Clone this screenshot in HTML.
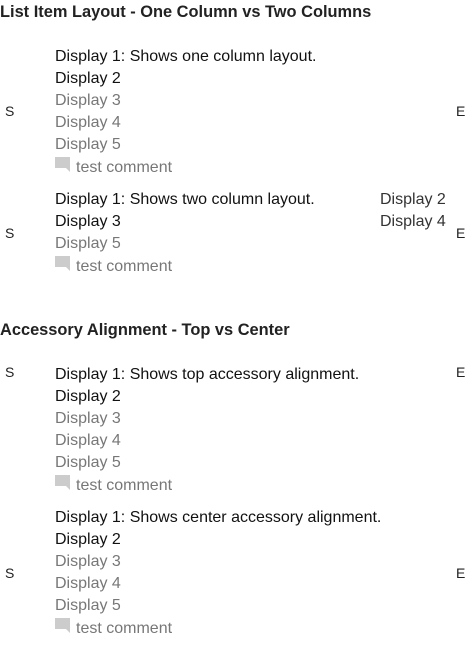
<!DOCTYPE html>
<html><head><meta charset="utf-8"><style>
body{margin:0;width:470px;height:664px;background:#fff;position:relative;overflow:hidden;font-family:"Liberation Sans",sans-serif}
.t{position:absolute;left:0;font-weight:bold;font-size:16.4px;color:#222;line-height:22px;white-space:nowrap}
.l{position:absolute;font-size:16px;line-height:22px;white-space:nowrap;color:#111;margin-top:1px}
.g{color:#777}
.a{position:absolute;font-size:14px;line-height:16px;color:#222}
.c{position:absolute;left:55px;width:15px;height:11px;background:#ccc}
.c:after{content:"";position:absolute;right:0;bottom:-4px;border-top:4px solid #ccc;border-left:4px solid transparent}
</style></head><body>
<div class="t" style="top:1px">List Item Layout - One Column vs Two Columns</div>

<div class="a" style="left:5px;top:103px">S</div><div class="a" style="left:456px;top:103px">E</div>
<div class="l" style="left:55px;top:45px">Display 1: Shows one column layout.</div>
<div class="l" style="left:55px;top:67px">Display 2</div>
<div class="l g" style="left:55px;top:89px">Display 3</div>
<div class="l g" style="left:55px;top:111px">Display 4</div>
<div class="l g" style="left:55px;top:133px">Display 5</div>
<div class="c" style="top:157px"></div><div class="l g" style="left:76px;top:156px">test comment</div>

<div class="a" style="left:5px;top:225px">S</div><div class="a" style="left:456px;top:225px">E</div>
<div class="l" style="left:55px;top:188px">Display 1: Shows two column layout.</div>
<div class="l" style="left:55px;top:210px">Display 3</div>
<div class="l g" style="left:55px;top:232px">Display 5</div>
<div class="c" style="top:256px"></div><div class="l g" style="left:76px;top:255px">test comment</div>
<div class="l" style="left:380px;top:188px;color:#333">Display 2</div>
<div class="l" style="left:380px;top:210px;color:#333">Display 4</div>

<div class="t" style="top:319px">Accessory Alignment - Top vs Center</div>

<div class="a" style="left:5px;top:364px">S</div><div class="a" style="left:456px;top:364px">E</div>
<div class="l" style="left:55px;top:363px">Display 1: Shows top accessory alignment.</div>
<div class="l" style="left:55px;top:385px">Display 2</div>
<div class="l g" style="left:55px;top:407px">Display 3</div>
<div class="l g" style="left:55px;top:429px">Display 4</div>
<div class="l g" style="left:55px;top:451px">Display 5</div>
<div class="c" style="top:475px"></div><div class="l g" style="left:76px;top:474px">test comment</div>

<div class="a" style="left:5px;top:565px">S</div><div class="a" style="left:456px;top:565px">E</div>
<div class="l" style="left:55px;top:506px">Display 1: Shows center accessory alignment.</div>
<div class="l" style="left:55px;top:528px">Display 2</div>
<div class="l g" style="left:55px;top:550px">Display 3</div>
<div class="l g" style="left:55px;top:572px">Display 4</div>
<div class="l g" style="left:55px;top:594px">Display 5</div>
<div class="c" style="top:618px"></div><div class="l g" style="left:76px;top:617px">test comment</div>
</body></html>
